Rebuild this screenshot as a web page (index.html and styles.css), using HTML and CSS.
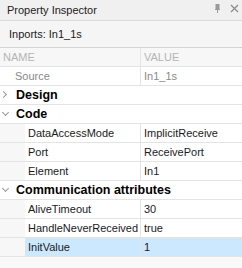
FILE: index.html
```html
<!DOCTYPE html>
<html>
<head>
<meta charset="utf-8">
<link rel="stylesheet" href="styles.css">
</head>
<body>
<div class="panel">
  <div class="titlebar">
    <span class="title">Property Inspector</span>
    <span class="tools">
      <svg class="pin" width="5" height="9" viewBox="0 0 5 9"><rect x="0.5" y="0" width="4" height="5" fill="#9a9a9a"/><rect x="0" y="5" width="5" height="1" fill="#9a9a9a"/><rect x="2" y="6" width="1" height="3" fill="#9a9a9a"/></svg>
      <svg class="close" width="9" height="9" viewBox="0 0 9 9"><path d="M1 1L8 8M8 1L1 8" stroke="#8a8a8a" stroke-width="1.2"/></svg>
    </span>
  </div>
  <div class="subtitle">Inports: In1_1s</div>
  <div class="grid">
    <div class="row head"><div class="name">NAME</div><div class="val">VALUE</div></div>
    <div class="row ro"><div class="name lvl1">Source</div><div class="val">In1_1s</div></div>
    <div class="row group"><div class="name"><span class="chev right"></span>Design</div></div>
    <div class="row group"><div class="name"><span class="chev down"></span>Code</div></div>
    <div class="row"><div class="gutter"></div><div class="name lvl2">DataAccessMode</div><div class="val">ImplicitReceive</div></div>
    <div class="row"><div class="gutter"></div><div class="name lvl2">Port</div><div class="val">ReceivePort</div></div>
    <div class="row"><div class="gutter"></div><div class="name lvl2">Element</div><div class="val">In1</div></div>
    <div class="row group"><div class="name"><span class="chev down"></span>Communication attributes</div></div>
    <div class="row"><div class="gutter"></div><div class="name lvl2">AliveTimeout</div><div class="val">30</div></div>
    <div class="row"><div class="gutter"></div><div class="name lvl2">HandleNeverReceived</div><div class="val">true</div></div>
    <div class="row sel"><div class="gutter"></div><div class="name lvl2">InitValue</div><div class="val">1</div></div>
  </div>
</div>
</body>
</html>
```

FILE: styles.css
```css
html, body {
  margin: 0;
  padding: 0;
  background: #f7f7f7;
}
.panel {
  width: 242px;
  height: 268px;
  font-family: "Liberation Sans", Arial, sans-serif;
  font-size: 11px;
  color: #1a1a1a;
  background: #f9f9f9;
}
.titlebar {
  height: 20px;
  background: #f0f0f0;
  border-bottom: 1px solid #dadada;
  display: flex;
  align-items: center;
  justify-content: space-between;
  padding: 0 3px 0 7px;
}
.title {
  font-size: 11px;
  color: #222;
}
.tools {
  display: flex;
  align-items: center;
  gap: 10px;
  padding-bottom: 3px;
}
.subtitle {
  height: 26px;
  line-height: 26px;
  padding-left: 9px;
  font-size: 11px;
  background: #f5f5f5;
  border-bottom: 1px solid #d4d4d4;
}
.grid {
  background: #fff;
}
.row {
  display: flex;
  height: 18px;
  line-height: 18px;
  border-bottom: 1px solid #e4e4e4;
  background: #fff;
}
.row .name {
  width: 140px;
  box-sizing: border-box;
  white-space: nowrap;
  overflow: hidden;
}
.row .val {
  flex: 1;
  border-left: 1px solid #e4e4e4;
  padding-left: 3px;
  white-space: nowrap;
}
.head {
  background: #f7f7f7;
  color: #b4b4b4;
}
.head .name { padding-left: 3px; }
.ro { color: #8a8a8a; }
.ro .name { padding-left: 15px; }
.group .name {
  width: auto;
  font-weight: bold;
  font-size: 12.5px;
  color: #000;
  display: flex;
  align-items: center;
}
.chev {
  width: 16px;
  height: 18px;
  position: relative;
  flex: none;
}
.chev::before {
  content: "";
  position: absolute;
  width: 4px;
  height: 4px;
  border-right: 1px solid #999;
  border-bottom: 1px solid #999;
}
.chev.right::before {
  left: 1px;
  top: 6px;
  transform: rotate(-45deg);
}
.chev.down::before {
  left: 3px;
  top: 5px;
  transform: rotate(45deg);
}
.gutter {
  width: 25px;
  flex: none;
  background: #f7f7f7;
}
.row .name.lvl2 {
  width: 115px;
  padding-left: 3px;
}
.sel .name, .sel .val {
  background: #cce8ff;
}
```
